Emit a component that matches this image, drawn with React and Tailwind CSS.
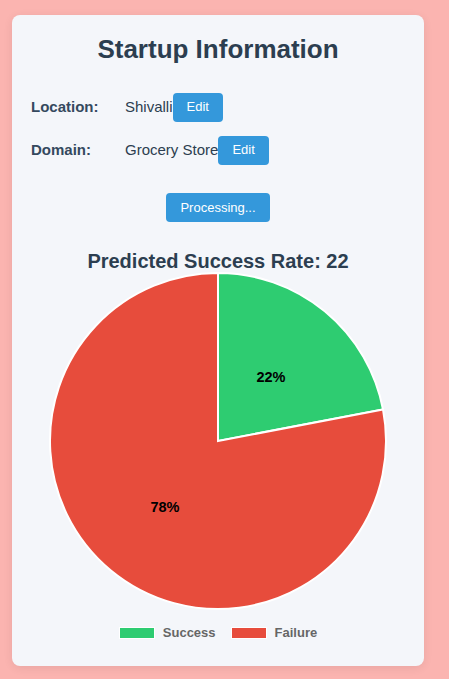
import React from 'react';

const R = 168;
const C = 170;

function slicePath(start, end) {
  const a0 = (start * 2 * Math.PI) - Math.PI / 2;
  const a1 = (end * 2 * Math.PI) - Math.PI / 2;
  const x0 = C + R * Math.cos(a0);
  const y0 = C + R * Math.sin(a0);
  const x1 = C + R * Math.cos(a1);
  const y1 = C + R * Math.sin(a1);
  const large = end - start > 0.5 ? 1 : 0;
  return `M${C},${C} L${x0},${y0} A${R},${R} 0 ${large} 1 ${x1},${y1} Z`;
}

const PieChart = ({ rate }) => {
  const s = rate / 100;
  return (
    <svg width="340" height="340" viewBox="0 0 340 340">
      <path d={slicePath(0, s)} fill="#2ecc71" stroke="#ffffff" strokeWidth="2" />
      <path d={slicePath(s, 1)} fill="#e74c3c" stroke="#ffffff" strokeWidth="2" />
      <text x="223" y="111" textAnchor="middle" fontSize="14.5" fontWeight="bold" fill="#000" fontFamily="'Liberation Sans', Arial, sans-serif">{rate}%</text>
      <text x="117" y="241" textAnchor="middle" fontSize="14.5" fontWeight="bold" fill="#000" fontFamily="'Liberation Sans', Arial, sans-serif">{100 - rate}%</text>
    </svg>
  );
};

const Row = ({ label, value }) => {
  return (
    <div className="flex flex-row items-center">
      <div className="w-[94px] font-bold text-[#34495e]">{label}</div>
      <div className="text-[#2c3e50]">{value}</div>
      <button className="bg-[#3498db] text-white text-[13px] rounded-[4px] px-[14px] h-[29px] leading-[16px] pb-[2px]">Edit</button>
    </div>
  );
};

export default function App() {
  return (
    <div className="min-h-[679px] bg-[#fbb4b0] pt-[15px] pl-[12px] font-['Liberation_Sans',Arial,sans-serif] text-[15px]">
      <div className="w-[412px] h-[651px] bg-[#f4f6fa] rounded-[8px] shadow-[0_2px_10px_rgba(0,0,0,0.08)] pt-[19px] px-[19px]">
        <h1 className="text-center text-[26px] leading-[30px] font-bold text-[#2c3e50]">Startup Information</h1>
        <div className="flex flex-col gap-[14px] mt-[29px]">
          <Row label="Location:" value="Shivalli" />
          <Row label="Domain:" value="Grocery Store" />
        </div>
        <div className="flex justify-center mt-[28px]">
          <button className="bg-[#3498db] text-white text-[13px] rounded-[4px] px-[14px] h-[29px] leading-[16px]">Processing...</button>
        </div>
        <h2 className="text-center text-[20px] leading-[24px] font-bold text-[#2c3e50] mt-[27px]">Predicted Success Rate: 22</h2>
        <div className="flex justify-center mt-[-2px]">
          <PieChart rate={22} />
        </div>
        <div className="flex flex-row justify-center items-center gap-[15px] mt-[12px] text-[13px] font-bold text-[#666666]">
          <div className="flex flex-row items-center gap-[8px]">
            <span className="w-[36px] h-[12px] bg-[#2ecc71] border border-white"></span>
            <span>Success</span>
          </div>
          <div className="flex flex-row items-center gap-[8px]">
            <span className="w-[36px] h-[12px] bg-[#e74c3c] border border-white"></span>
            <span>Failure</span>
          </div>
        </div>
      </div>
    </div>
  );
}
